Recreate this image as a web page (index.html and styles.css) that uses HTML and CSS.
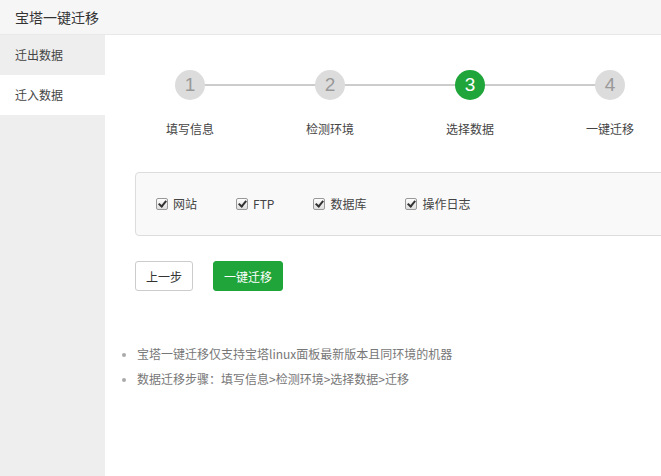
FILE: index.html
```html
<!DOCTYPE html>
<html lang="zh-CN">
<head>
    <meta charset="UTF-8">
    <title>宝塔一键迁移</title>
    <link rel="stylesheet" href="styles.css">
</head>
<body>

    <div class="header">宝塔一键迁移</div>

    <div class="layout">
        <!-- left menu -->
        <div class="sidebar">
            <div class="menu-item">迁出数据</div>
            <div class="menu-item active">迁入数据</div>
        </div>

        <div class="main">
            <!-- step bar -->
            <div class="steps">
                <div class="step">
                    <div class="step-num">1</div>
                    <div class="step-name">填写信息</div>
                </div>
                <div class="step">
                    <div class="step-num">2</div>
                    <div class="step-name">检测环境</div>
                </div>
                <div class="step current">
                    <div class="step-num">3</div>
                    <div class="step-name">选择数据</div>
                </div>
                <div class="step">
                    <div class="step-num">4</div>
                    <div class="step-name">一键迁移</div>
                </div>
            </div>

            <div class="content">
                <div class="data-box">
                    <label class="data-item"><input type="checkbox" checked> 网站</label>
                    <label class="data-item"><input type="checkbox" checked> FTP</label>
                    <label class="data-item"><input type="checkbox" checked> 数据库</label>
                    <label class="data-item"><input type="checkbox" checked> 操作日志</label>
                </div>

                <div class="btn-row">
                    <button type="button" class="btn btn-default">上一步</button>
                    <button type="button" class="btn btn-success">一键迁移</button>
                </div>
            </div>

            <ul class="tips">
                <li>宝塔一键迁移仅支持宝塔linux面板最新版本且同环境的机器</li>
                <li>数据迁移步骤：填写信息&gt;检测环境&gt;选择数据&gt;迁移</li>
            </ul>
        </div>
    </div>

</body>
</html>
```

FILE: styles.css
```css
body {
    margin: 0;
    font-family: "Noto Sans CJK SC", "Liberation Sans", sans-serif;
    font-size: 12px;
    color: #333;
    background-color: #fff;
    overflow: hidden;
}

.header {
    height: 35px;
    line-height: 34px;
    box-sizing: border-box;
    padding-left: 15px;
    font-size: 14px;
    color: #333;
    background-color: #f6f6f6;
    border-bottom: 1px solid #e8e8e8;
}

.layout {
    display: flex;
    height: 441px;
}

/* Left menu */
.sidebar {
    width: 105px;
    flex-shrink: 0;
    background-color: #eeeeee;
}

.menu-item {
    height: 40px;
    line-height: 40px;
    padding-left: 15px;
    font-size: 12px;
    color: #444;
}

.menu-item.active {
    background-color: #fff;
}

.main {
    flex: 1;
    min-width: 0;
    overflow: hidden;
}

/* Steps */
.steps {
    display: flex;
    padding: 35px 0 0 15px;
}

.step {
    position: relative;
    width: 140px;
    flex-shrink: 0;
    text-align: center;
}

/* connecting line to the next step */
.step::before {
    content: "";
    position: absolute;
    top: 14px;
    left: 70px;
    width: 140px;
    height: 2px;
    background-color: #ccc;
}

.step:last-child::before {
    display: none;
}

.step-num {
    position: relative;
    width: 30px;
    height: 30px;
    line-height: 30px;
    margin: 0 auto;
    border-radius: 50%;
    background-color: #dcdcdc;
    color: #999;
    font-family: "Liberation Sans", sans-serif;
    font-size: 19px;
}

.step.current .step-num {
    background-color: #20a53a;
    color: #fff;
}

.step-name {
    margin-top: 20px;
    line-height: 18px;
    color: #444;
}

.content {
    padding-left: 30px;
}

/* Data selection box */
.data-box {
    width: 600px;
    margin-top: 34px;
    padding: 21px 20px;
    line-height: 20px;
    background-color: #f9f9f9;
    border: 1px solid #ddd;
    border-radius: 4px;
    display: flex;
}

.data-item {
    display: flex;
    align-items: center;
    flex-shrink: 0;
    margin-right: 39px;
    color: #444;
}

.data-item input {
    -webkit-appearance: none;
    appearance: none;
    position: relative;
    width: 12px;
    height: 12px;
    margin: 0 5px 0 0;
    border: 1px solid #999;
    border-radius: 2px;
    background: linear-gradient(#fdfdfd, #dedede);
}

.data-item input:checked::after {
    content: "";
    position: absolute;
    left: 3px;
    top: 0px;
    width: 3px;
    height: 6px;
    border: solid #333;
    border-width: 0 2px 2px 0;
    transform: rotate(40deg);
}

/* Buttons */
.btn-row {
    display: flex;
    gap: 20px;
    margin-top: 25px;
}

.btn {
    height: 30px;
    padding: 0 10px;
    border-radius: 3px;
    font-family: "Noto Sans CJK SC", sans-serif;
    font-size: 12px;
    cursor: pointer;
}

.btn-default {
    background-color: #fff;
    border: 1px solid #ccc;
    color: #333;
}

.btn-success {
    background-color: #20a53a;
    border: 1px solid #20a53a;
    color: #fff;
}

/* Tips list */
.tips {
    margin: 50px 0 0 0;
    padding-left: 32px;
    color: #777;
    line-height: 25px;
}

.tips li::marker {
    color: #aaa;
    font-size: 10px;
}
```
